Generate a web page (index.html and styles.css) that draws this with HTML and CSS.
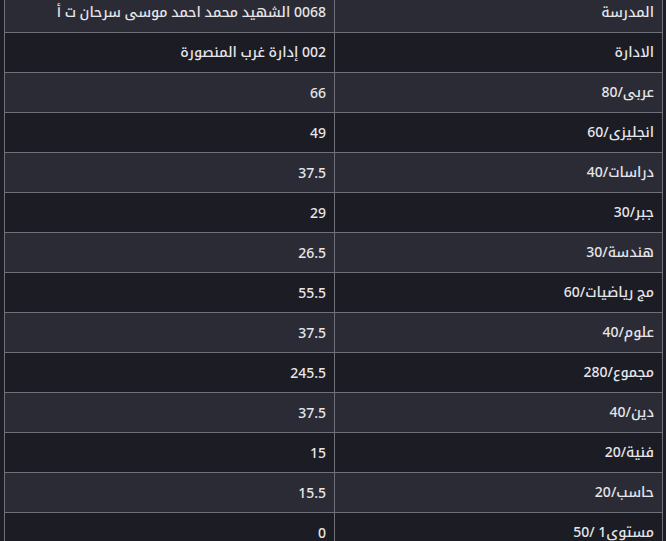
FILE: index.html
```html
<!DOCTYPE html>
<html lang="ar" dir="rtl">
<head>
  <meta charset="UTF-8" />
  <meta name="viewport" content="width=device-width, initial-scale=1.0" />
  <title>النتيجة</title>
  <link rel="stylesheet" href="styles.css">
</head>
<body>
  <div class="result">
    <table class="grades">
      <tr><td>المدرسة</td><td>0068 الشهيد محمد احمد موسى سرحان ت أ</td></tr>
      <tr><td>الادارة</td><td>002 إدارة غرب المنصورة</td></tr>
      <tr><td>عربى/80</td><td>66</td></tr>
      <tr><td>انجليزى/60</td><td>49</td></tr>
      <tr><td>دراسات/40</td><td>37.5</td></tr>
      <tr><td>جبر/30</td><td>29</td></tr>
      <tr><td>هندسة/30</td><td>26.5</td></tr>
      <tr><td>مج رياضيات/60</td><td>55.5</td></tr>
      <tr><td>علوم/40</td><td>37.5</td></tr>
      <tr><td>مجموع/280</td><td>245.5</td></tr>
      <tr><td>دين/40</td><td>37.5</td></tr>
      <tr><td>فنية/20</td><td>15</td></tr>
      <tr><td>حاسب/20</td><td>15.5</td></tr>
      <tr><td>مستوى1 /50</td><td>0</td></tr>
    </table>
  </div>
</body>
</html>
```

FILE: styles.css
```css
:root {
  --page-bg: #1d1d25;
  --row-light: #2b2b35;
  --row-dark: #1c1c24;
  --line: #70707a;
  --text: #e6e6ea;
}

* {
  box-sizing: border-box;
  margin: 0;
  padding: 0;
}

body {
  background: var(--page-bg);
  font-family: "Noto Sans", "Noto Kufi Arabic", "Noto Sans Arabic", "DejaVu Sans", sans-serif;
  color: var(--text);
}

.result {
  margin-top: -8px;
  padding: 0 3px 0 5px;
}

.grades {
  width: 659px;
  border-collapse: collapse;
  border-left: 1px solid var(--line);
  border-right: 1px solid var(--line);
}

.grades td {
  height: 40px;
  padding: 0 8px;
  font-size: 14px;
  font-weight: 500;
  text-align: right;
  border-top: 1px solid var(--line);
  border-bottom: 1px solid var(--line);
}

.grades td:first-child {
  width: 328px;
  border-left: 1px solid var(--line);
}

.grades tr:nth-child(odd) {
  background: var(--row-light);
}

.grades tr:nth-child(even) {
  background: var(--row-dark);
}
```
